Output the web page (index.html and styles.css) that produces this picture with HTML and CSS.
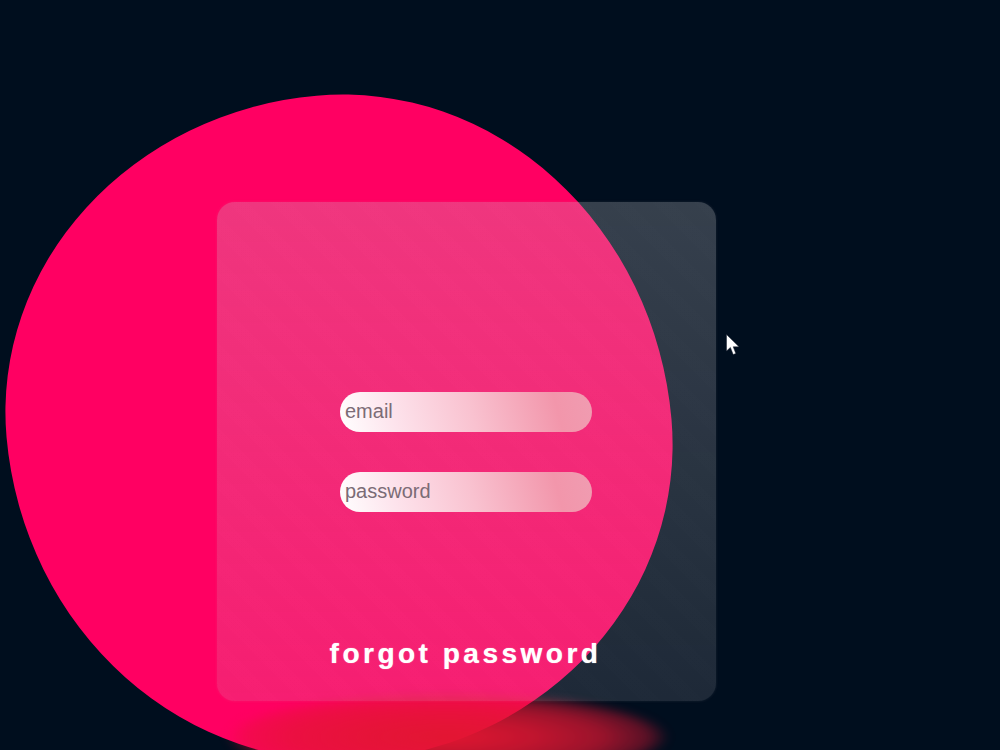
FILE: index.html
```html
<!DOCTYPE html>
<html lang="en">
<head>
<meta charset="utf-8">
<title>Login</title>
<link rel="stylesheet" href="styles.css">
</head>
<body>
<main class="stage">
  <div class="blob"></div>
  <div class="glow"></div>
  <form class="card">
    <div class="fields">
      <input class="field" type="text" placeholder="email">
      <input class="field" type="password" placeholder="password">
    </div>
    <a class="forgot" href="#">forgot password</a>
  </form>
  <svg class="cursor" width="14" height="22" viewBox="0 0 14 22">
    <path d="M0.5 0.5V17L4.4 13.4L7.2 20.6L9.8 19.5L7.2 12.8H13Z" fill="#fff" stroke="#1a2030" stroke-width="0.5"/>
  </svg>
</main>
</body>
</html>
```
FILE: styles.css
```css
* { box-sizing: border-box; }
html, body { margin: 0; height: 100%; }
body { background: #000e1e; overflow: hidden; font-family: "Liberation Sans", Arial, sans-serif; }
.stage { position: relative; width: 1000px; height: 750px; overflow: hidden; padding: 202px 0 0 217px; }
.blob {
  position: absolute; left: 7px; top: 95px; width: 664px; height: 666px;
  background: #ff0062;
  border-radius: 51% 49% 50% 50% / 47% 53% 47% 53%;
  transform: rotate(-5deg);
}
.glow {
  position: absolute; left: 225px; top: 692px; width: 445px; height: 90px;
  background: radial-gradient(closest-side, rgba(226,22,50,1) 0%, rgba(226,22,50,.85) 40%, rgba(226,22,50,.68) 70%, rgba(226,22,50,.4) 90%, rgba(226,22,50,0) 100%);
  filter: blur(4px);
}
.card {
  position: relative; width: 499px; height: 499px; border-radius: 18px;
  background:
    repeating-linear-gradient(45deg, rgba(255,255,255,.004) 0 14px, rgba(0,0,0,.004) 14px 30px),
    linear-gradient(180deg, rgba(200,200,205,.27) 0%, rgba(200,200,205,.15) 100%);
  box-shadow: 0 0 3px rgba(200,200,205,.12);
  display: flex; flex-direction: column; align-items: center;
  padding-top: 190px;
}
.fields { display: flex; flex-direction: column; gap: 40px; margin-right: 1px; }
.field {
  display: block; width: 252px; height: 40px; border: 0; outline: 0; border-radius: 20px;
  padding: 0 5px 2px; font: 20px "Liberation Sans", Arial, sans-serif;
  background: linear-gradient(75deg, #fff 0%, #fde3ec 22%, #f9c2d0 52%, #f296ab 85%, #f09cb1 100%);
}
.field::placeholder { color: #7b6c76; opacity: 1; }
.forgot {
  margin-top: 125px; margin-right: 2px; color: #fff; font-weight: 700; font-size: 28px; line-height: 34px;
  letter-spacing: 3.5px; text-decoration: none; text-shadow: 0 0 1px rgba(255,255,255,.8);
}
.cursor { position: absolute; left: 726px; top: 334px; }
```
